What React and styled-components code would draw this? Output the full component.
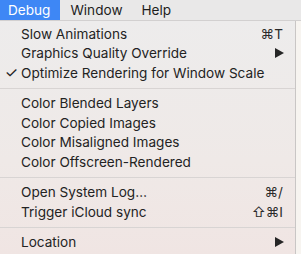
import React from "react";
import styled, { createGlobalStyle } from "styled-components";

const GlobalStyle = createGlobalStyle`
  html, body {
    margin: 0;
    padding: 0;
    background: #f4f1ef;
    overflow: hidden;
  }
  body {
    font-family: "Inter", "Liberation Sans", sans-serif;
  }
`;

const menus = ["Debug", "Window", "Help"];

const sections = [
  [
    { label: "Slow Animations", shortcut: "⌘T" },
    { label: "Graphics Quality Override", submenu: true },
    { label: "Optimize Rendering for Window Scale", checked: true },
  ],
  [
    { label: "Color Blended Layers" },
    { label: "Color Copied Images" },
    { label: "Color Misaligned Images" },
    { label: "Color Offscreen-Rendered" },
  ],
  [
    { label: "Open System Log…", shortcut: "⌘/" },
    { label: "Trigger iCloud sync", shortcut: "⇧⌘I" },
  ],
  [{ label: "Location", submenu: true }],
];

const Arrow = () => (
  <svg width="9" height="10" viewBox="0 0 9 10">
    <path d="M0 0 L9 5 L0 10 Z" fill="#262626" />
  </svg>
);

const App = () => (
  <>
    <GlobalStyle />
    <Screen>
      <MenuBar>
        {menus.map((m, i) => (
          <BarItem key={m} active={i === 0}>
            {m}
          </BarItem>
        ))}
      </MenuBar>
      <Body>
        <Menu>
          {sections.map((items, si) => (
            <React.Fragment key={si}>
              {si > 0 && <Separator />}
              {items.map((it) => (
                <Item key={it.label}>
                  <Check>{it.checked ? "✓" : ""}</Check>
                  <Label>{it.label}</Label>
                  {it.shortcut && <Shortcut>{it.shortcut}</Shortcut>}
                  {it.submenu && (
                    <Sub>
                      <Arrow />
                    </Sub>
                  )}
                </Item>
              ))}
            </React.Fragment>
          ))}
        </Menu>
        <Behind />
      </Body>
    </Screen>
  </>
);

export default App;

const Screen = styled.div`
  width: 301px;
  height: 254px;
  display: flex;
  flex-direction: column;
`;

const MenuBar = styled.div`
  height: 20px;
  display: flex;
  background: #e9e8e8;
  border-bottom: 1px solid #d2d0d0;
`;

const BarItem = styled.div`
  padding: 0 ${(p) => (p.active ? "10px" : "8px")} 0 8px;
  margin-right: ${(p) => (p.active ? "2px" : "3px")};
  font-size: 13.6px;
  line-height: 20px;
  color: ${(p) => (p.active ? "#fff" : "#1e1e1e")};
  background: ${(p) => (p.active ? "#3e87f5" : "transparent")};
`;

const Body = styled.div`
  flex: 1;
  display: flex;
`;

const Menu = styled.div`
  width: 295px;
  padding-top: 3px;
  background: linear-gradient(#edecec, #efe9e7 60%, #f0e5e3);
  border-right: 1px solid #c9c6c5;
`;

const Behind = styled.div`
  flex: 1;
  background: #f7f4f0;
`;

const Item = styled.div`
  height: 19.5px;
  display: flex;
  align-items: center;
  font-size: 13.6px;
  color: #232323;
  padding-right: 12px;
`;

const Check = styled.span`
  width: 21px;
  text-align: center;
  padding-left: 2px;
  box-sizing: border-box;
  font-size: 15px;
`;

const Label = styled.span`
  flex: 1;
  white-space: nowrap;
`;

const Shortcut = styled.span`
  color: #2a2a2a;
`;

const Sub = styled.span`
  display: flex;
  align-items: center;
  margin-right: -1px;
`;

const Separator = styled.div`
  height: 1px;
  margin: 5px 0 5px;
  background: #d8d4d3;
`;
